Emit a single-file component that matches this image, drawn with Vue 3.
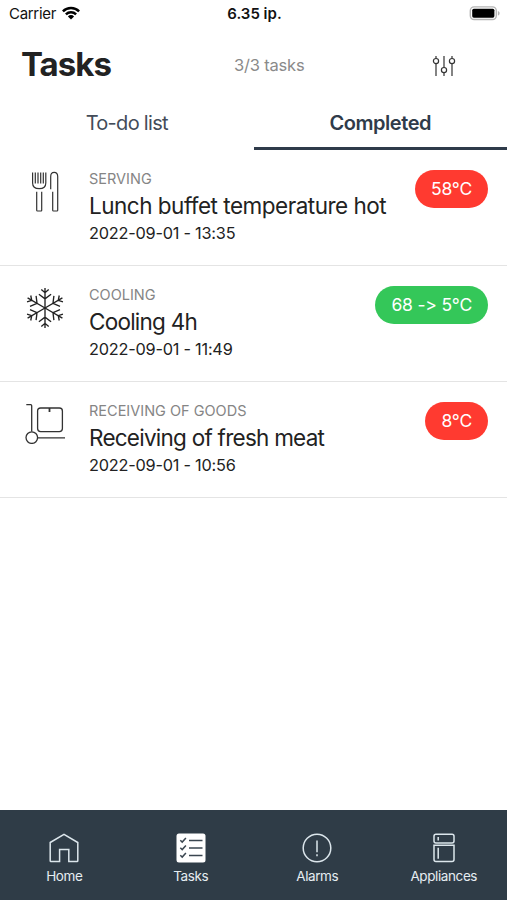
<template>
  <div class="screen">
    <div class="status-bar">
      <div class="carrier">
        <span>Carrier</span>
        <svg class="wifi" width="18" height="14" viewBox="0 0 18 14">
          <g fill="none" stroke="#000" stroke-width="2.5">
            <path d="M0.9 5.3a11.6 11.6 0 0 1 16.2 0" />
            <path d="M3.9 8.4a7.3 7.3 0 0 1 10.2 0" />
          </g>
          <path d="M9 13.6L5.9 10.4a4.4 4.4 0 0 1 6.2 0z" fill="#000" />
        </svg>
      </div>
      <div class="clock">6.35 ip.</div>
      <svg class="battery" width="31" height="15" viewBox="0 0 31 15">
        <rect x="1.3" y="0.9" width="26" height="12.600" rx="3.800" fill="#fff" stroke="#b5b5b5" stroke-width="1.400" />
        <rect x="3.200" y="2.700" width="22.200" height="9" rx="1.600" fill="#000" />
        <path d="M28.900 5v4.600c1.200-.4 1.700-1.300 1.700-2.300s-.5-1.900-1.700-2.300z" fill="#b5b5b5" />
      </svg>
    </div>

    <header class="header">
      <h1>Tasks</h1>
      <span class="count">{{ tasks.length }}/3 tasks</span>
      <button class="filter" aria-label="Filter">
        <svg width="24" height="22" viewBox="0 0 24 22" fill="none" stroke="#333" stroke-width="1.2">
          <path d="M4 1v2.500M4 8.700V21M12 1v11.500M12 17.700V21M20 1v2.500M20 8.700V21" />
          <circle cx="4" cy="6.100" r="2.600" />
          <circle cx="12" cy="15.100" r="2.600" />
          <circle cx="20" cy="6.100" r="2.600" />
        </svg>
      </button>
    </header>

    <div class="tabs">
      <button
        v-for="tab in tabs"
        :key="tab"
        :class="['tab', { active: tab === activeTab }]"
        @click="activeTab = tab"
      ><span>{{ tab }}</span></button>
    </div>

    <ul class="tasks">
      <li v-for="task in tasks" :key="task.title" :class="['task', task.icon]">
        <div class="task-icon">
          <svg v-if="task.icon === 'serving'" width="40" height="42" viewBox="0 0 40 42" fill="none" stroke="#333" stroke-width="1.2">
            <path d="M7.600 2.500v10.500c0 3.800 2.600 5.700 6.600 5.700s6.600-1.900 6.600-5.700V2.500M10.300 2.500v11M13 2.500v11M15.700 2.500v11M18.300 2.500v11" />
            <path d="M11.700 21.800V40.200a.8.800 0 0 0 .8.800h3.400a.8.800 0 0 0 .8-.8V21.800" />
            <path d="M25.700 19.300V6.500c0-2.600 1.200-4.100 3.500-4.100s3.500 1.500 3.500 4.100V40.200a.8.800 0 0 1-.8.800h-3.400a.8.800 0 0 1-.8-.8V21.800" />
          </svg>
          <svg v-else-if="task.icon === 'cooling'" width="40" height="42" viewBox="0 0 40 42" fill="none" stroke="#222" stroke-width="1.350">
            <g v-for="n in 6" :key="n" :transform="`rotate(${n * 60} 20 22)`">
              <path d="M20 22V1.900M16.300 3.400l3.700 3.300 3.700-3.300M13.900 8.200l6.100 4.600 6.100-4.600" />
            </g>
          </svg>
          <svg v-else width="40" height="42" viewBox="0 0 40 42" fill="none" stroke="#333" stroke-width="1.300">
            <path d="M1.300 2.700h4.400c.6 0 1 .4 1 1V29.500M12.600 35.800H40" />
            <circle cx="6.800" cy="35.600" r="5.800" />
            <rect x="12.600" y="6" width="24.800" height="23.600" rx="3" />
            <path d="M24.500 6v4" stroke-width="1.800" />
          </svg>
        </div>
        <div class="task-info">
          <div class="category"><span>{{ task.category }}</span></div>
          <div class="title"><span>{{ task.title }}</span></div>
          <div class="date"><span>{{ task.date }}</span></div>
        </div>
        <div :class="['badge', task.status]">{{ task.result }}</div>
      </li>
    </ul>

    <nav class="nav">
      <a v-for="item in nav" :key="item" class="nav-item">
        <svg width="30" height="30" viewBox="0 0 30 30" fill="none" stroke="#dce6ec" stroke-width="1.500">
          <path v-if="item === 'Home'" d="M1.200 9.500L15 1.300l13.800 8.200v18.200c0 .5-.3.800-.8.800h-8.200V16.400h-9.200v12.100H2c-.5 0-.8-.3-.8-.8z" />
          <template v-else-if="item === 'Tasks'">
            <rect x="0.500" y="0.500" width="29" height="29" rx="2.500" fill="#fff" stroke="none" />
            <path d="M13 7.500h13.500M13 15h13.500M13 22.500h13.500" stroke="#3a4650" />
            <path d="M4.300 7.300l1.900 1.800 3.700-4M4.300 14.800l1.900 1.800 3.700-4M4.300 22.300l1.900 1.800 3.700-4" stroke="#3a4650" />
          </template>
          <template v-else-if="item === 'Alarms'">
            <circle cx="15" cy="15" r="13.800" />
            <path d="M15 7.500v11.700M15 21.200v2" />
          </template>
          <template v-else>
            <rect x="5" y="1.200" width="20" height="8.800" rx="2" />
            <path d="M5 12.200h20v14.300c0 1.300-.8 2-2 2H7c-1.200 0-2-.7-2-2z" />
            <path d="M9.200 4v3.500M9.200 14.800v11" />
          </template>
        </svg>
        <span>{{ item }}</span>
      </a>
    </nav>
  </div>
</template>

<script setup>
import { ref } from 'vue'

const tabs = ['To-do list', 'Completed']
const activeTab = ref('Completed')

const tasks = [
  {
    icon: 'serving',
    category: 'SERVING',
    title: 'Lunch buffet temperature hot',
    date: '2022-09-01 - 13:35',
    result: '58°C',
    status: 'failed'
  },
  {
    icon: 'cooling',
    category: 'COOLING',
    title: 'Cooling 4h',
    date: '2022-09-01 - 11:49',
    result: '68 -> 5°C',
    status: 'ok'
  },
  {
    icon: 'receiving',
    category: 'RECEIVING OF GOODS',
    title: 'Receiving of fresh meat',
    date: '2022-09-01 - 10:56',
    result: '8°C',
    status: 'failed'
  }
]

const nav = ['Home', 'Tasks', 'Alarms', 'Appliances']
</script>

<style>
body {
  margin: 0;
  background: #fff;
}
</style>

<style scoped>
.screen {
  width: 507px;
  height: 900px;
  display: flex;
  flex-direction: column;
  overflow: hidden;
  background: #fff;
  color: #222;
  font-family: Inter, "Liberation Sans", sans-serif;
  font-feature-settings: "calt" 0;
}

button {
  border: none;
  background: none;
  padding: 0;
  font-family: inherit;
}

.status-bar {
  height: 28px;
  padding: 0 7px 1px 9px;
  box-sizing: border-box;
  display: grid;
  grid-template-columns: 1fr auto 1fr;
  align-items: center;
  color: #111;
  font-size: 15px;
}

.carrier {
  display: flex;
  align-items: center;
  gap: 6px;
  letter-spacing: -0.3px;
}

.wifi {
  margin-top: -2px;
}

.clock {
  font-weight: 600;
  letter-spacing: 0;
}

.battery {
  justify-self: end;
  margin-top: 0;
}

.header {
  height: 72px;
  padding: 0 51px 0 21px;
  display: grid;
  grid-template-columns: 213px 1fr auto;
  align-items: center;
}

h1 {
  margin: 0;
  font-size: 33px;
  line-height: 40px;
  letter-spacing: -1px;
}

.count {
  margin-top: 1px;
  color: #8a8a8a;
  font-size: 16.5px;
  letter-spacing: -0.2px;
}

.filter {
  height: 22px;
  margin-top: 3px;
}

.tabs {
  height: 50px;
  display: flex;
}

.tab {
  flex: 1;
  padding-bottom: 2px;
  border-bottom: 3px solid transparent;
  color: #434c59;
  font-size: 20px;
  letter-spacing: -0.7px;
}

.tab.active {
  border-color: #2f3b4a;
  color: #2f3b4a;
  font-weight: 600;
  letter-spacing: -0.45px;
}

.tasks {
  flex: 1;
  margin: 0;
  padding: 0;
  list-style: none;
}

.task {
  height: 116px;
  box-sizing: border-box;
  padding: 20px 19px 0 25px;
  border-bottom: 1px solid #e4e4e4;
  display: flex;
  align-items: flex-start;
}

.task-icon {
  width: 64px;
  height: 42px;
}

.task-info {
  flex: 1;
  white-space: nowrap;
}

.category {
  color: #858585;
  font-size: 14.5px;
  line-height: 18px;
}

.title {
  font-size: 22.5px;
  line-height: 36px;
  letter-spacing: -0.75px;
}

.serving .title {
  letter-spacing: -0.5px;
}

.date {
  font-size: 16.3px;
  line-height: 18px;
  letter-spacing: -0.22px;
}

.badge {
  height: 38px;
  padding: 0 16px;
  border-radius: 19px;
  color: #fff;
  font-size: 17.5px;
  line-height: 38px;
  letter-spacing: -0.2px;
}

.badge.failed {
  background: #ff3a30;
}

.badge.ok {
  background: #34c759;
}

.nav {
  height: 90px;
  padding-left: 1px;
  box-sizing: border-box;
  display: flex;
  background: #2f3c47;
  color: #e6edf2;
}

.nav-item {
  flex: 1;
  padding-top: 23px;
  display: flex;
  flex-direction: column;
  align-items: center;
  gap: 4px;
  font-size: 13.5px;
  line-height: 18px;
  letter-spacing: -0.4px;
}
</style>
